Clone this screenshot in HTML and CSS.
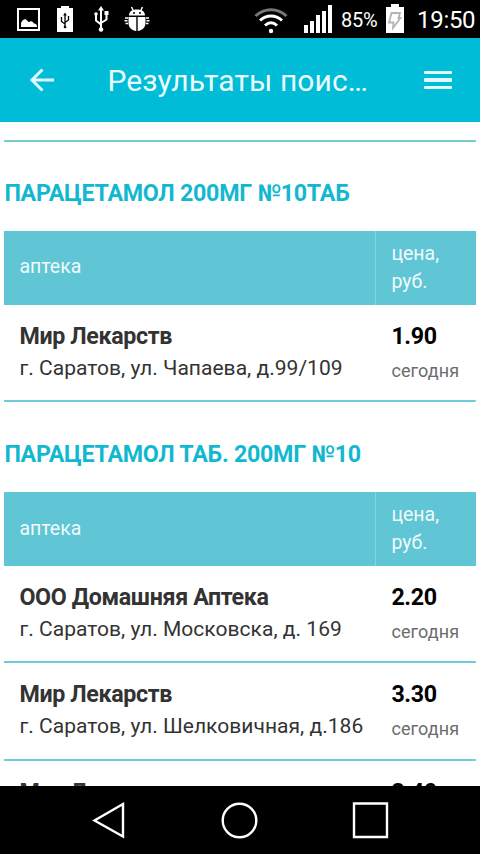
FILE: index.html
```html
<!DOCTYPE html>
<html lang="ru">
<head>
<meta charset="utf-8">
<title>Результаты поиска</title>
<link rel="stylesheet" href="styles.css">
</head>
<body>
<div class="status">
  <svg class="status-left" width="160" height="38" viewBox="0 0 160 38">
    <rect x="18" y="9" width="21" height="21" fill="none" stroke="#fff" stroke-width="2"/>
    <path d="M21 27v-4c1.500-3 4-5 6-2.500 1 1.500 2 2 3 1 2-1 3 .5 4 2 2 0 3 1 3 3.500z" fill="#fff"/>
    <path d="M57 8h4V6h8v2h4v24H57z" fill="#fff"/>
    <g fill="none" stroke="#000" stroke-width="1.3"><path d="M65 14v13M61.500 17v4.500l3.500 2.500M68.500 16v4l-3.500 2.500"/></g>
    <path d="M63.200 15.500l1.800-3 1.800 3z"/><circle cx="65" cy="27" r="1.300"/>
    <g fill="none" stroke="#fff" stroke-width="2"><path d="M101 9v20M96 14v6.500l5 4M106.500 14v5.500l-5.500 3.500"/></g>
    <path d="M98 10.500l3-4.500 3 4.500zM104.500 11h4v4h-4z" fill="#fff"/><circle cx="96" cy="14" r="1.800" fill="#fff"/><circle cx="101" cy="29.500" r="2.300" fill="#fff"/>
    <path d="M129 15.500c0-4 3-6 8-6s8 2 8 6zM128.500 17h7.800v14c-5-.5-7.800-4-7.800-8zM137.700 17h7.800v6c0 4-2.800 7.500-7.800 8z" fill="#fff"/>
    <path d="M131.500 7l2 4M142.500 7l-2 4" stroke="#fff" stroke-width="1.500"/>
    <path d="M125 18h3M124.500 20.700h3M125.500 23.400h2.500M146 18h3M146.500 20.700h3M146 23.400h2.500" stroke="#fff" stroke-width="1.500"/>
    <circle cx="134" cy="13" r="1"/><circle cx="140" cy="13" r="1"/>
  </svg>
  <svg class="status-signal" width="80" height="38" viewBox="254 0 80 38">
    <g fill="none" stroke="#fff" stroke-width="3"><path d="M255.500 16c9-8.500 22-8.500 31 0" stroke="#777"/><path d="M260 20.500c6.500-6 15.500-6 22 0M265 25.500c3.800-3.500 8.200-3.500 12 0"/></g>
    <circle cx="271" cy="31" r="2.200" fill="#fff"/>
    <path d="M304 25h4v8h-4zM310 21h4v12h-4zM316 15h4v18h-4zM322 11h4v22h-4zM328 5h4v28h-4z" fill="#fff"/>
  </svg>
  <span class="percent">85%</span>
  <svg class="battery" width="18" height="38" viewBox="386 0 18 38">
    <path d="M386 7h5V4h8v3h5v26h-18z" fill="#fff"/>
    <path d="M391.500 13h8.500l-1.500 5h2l-7.500 10 .5-5.500H389z" fill="none" stroke="#b4b4b4" stroke-width="1.800"/>
  </svg>
  <span class="clock">19:50</span>
</div>
<header class="bar">
  <svg class="back" width="26" height="26" viewBox="0 0 26 26"><path d="M25 13H3.500M13.500 2.500L3 13l10.500 10.500" fill="none" stroke="#dff9fc" stroke-width="3"/></svg>
  <h1 class="title">Результаты поис…</h1>
  <div class="menu"><i></i><i></i><i></i></div>
</header>
<main class="content">
  <div class="rule"></div>
  <h2 class="drug">ПАРАЦЕТАМОЛ 200МГ №10ТАБ</h2>
  <section class="list">
    <div class="row head"><div class="place"><span class="label">аптека</span></div><div class="cost"><span class="label">цена,<br>руб.</span></div></div>
    <div class="row item"><div class="place"><b class="name">Мир Лекарств</b><span class="address">г. Саратов, ул. Чапаева, д.99/109</span></div><div class="cost"><b class="price">1.90</b><span class="date">сегодня</span></div></div>
  </section>
  <h2 class="drug second">ПАРАЦЕТАМОЛ ТАБ. 200МГ №10</h2>
  <section class="list">
    <div class="row head"><div class="place"><span class="label">аптека</span></div><div class="cost"><span class="label">цена,<br>руб.</span></div></div>
    <div class="row item"><div class="place"><b class="name">ООО Домашняя Аптека</b><span class="address">г. Саратов, ул. Московска, д. 169</span></div><div class="cost"><b class="price">2.20</b><span class="date">сегодня</span></div></div>
    <div class="row item"><div class="place"><b class="name">Мир Лекарств</b><span class="address">г. Саратов, ул. Шелковичная, д.186</span></div><div class="cost"><b class="price">3.30</b><span class="date">сегодня</span></div></div>
    <div class="row item"><div class="place"><b class="name">Мир Лекарств</b></div><div class="cost"><b class="price">3.40</b></div></div>
  </section>
</main>
<nav class="nav">
  <svg width="480" height="68" viewBox="0 0 480 68" fill="none" stroke="#fff" stroke-width="2.400"><path d="M123 18v32.500L94.500 34.500z"/><circle cx="239.500" cy="34.500" r="16.800"/><path d="M354 17.500h33v33.500h-33z"/></svg>
</nav>
</body>
</html>
```

FILE: styles.css
```css
* { box-sizing: border-box; }
body { margin: 0; width: 480px; height: 854px; overflow: hidden; display: flex; flex-direction: column; font-family: Roboto, "Liberation Sans", sans-serif; background: #fff; color: #333; }
svg { display: block; flex: none; }
.status { flex: none; height: 38px; background: #000; display: flex; align-items: center; color: #fff; white-space: nowrap; }
.status-signal { margin-left: 94px; }
.percent { width: 45px; margin-left: 7px; font-size: 20px; line-height: 38px; padding-top: 2px; letter-spacing: -0.2px; }
.clock { margin-left: 13px; font-size: 24px; line-height: 38px; padding-top: 2px; letter-spacing: -0.3px; }
.bar { flex: none; height: 84px; background: #00bcd7; display: flex; align-items: center; padding: 0 28px 0 29px; }
.title { margin: 0 0 0 52.5px; width: 316.5px; font-size: 30px; line-height: 40px; font-weight: 400; letter-spacing: 0.08px; color: #e9fbfd; padding-top: 2px; white-space: nowrap; }
.menu { width: 28px; display: flex; flex-direction: column; gap: 4px; }
.menu i { display: block; height: 3.5px; background: #dff9fc; border-radius: 1px; }
.content { flex: 1; min-height: 0; overflow: hidden; padding: 17.5px 4px 0 4.4px; }
.rule { height: 2px; background: #74ccd1; }
.drug { margin: 36px 0 22.5px; font-size: 23.25px; line-height: 31px; font-weight: 700; letter-spacing: -0.27px; color: #12b8d0; white-space: nowrap; }
.drug.second { margin-top: 36.8px; }
.row { display: flex; }
.place { width: 372px; padding: 0 0 0 15px; }
.cost { flex: 1; padding: 0 0 0 15px; }
.head { height: 73.5px; background: #60c5d4; color: #effbfc; font-size: 19.5px; line-height: 28px; }
.head .place { display: flex; align-items: center; border-right: 1px solid #86d5df; padding-bottom: 1px; }
.head .cost { display: flex; align-items: center; }
.item { height: 97.5px; padding-top: 15px; white-space: nowrap; background: linear-gradient(#70cbd6, #70cbd6) bottom / 100% 2px no-repeat; }
.name, .price { display: block; font-size: 23.25px; line-height: 32px; letter-spacing: -0.37px; }
.price { color: #000; }
.address { display: block; font-size: 21px; line-height: 32px; letter-spacing: 0.03px; color: #333; }
.date { display: block; font-size: 18px; line-height: 37px; letter-spacing: 0.1px; color: #6c6c6c; }
.nav { flex: none; height: 68px; background: #000; }
```
